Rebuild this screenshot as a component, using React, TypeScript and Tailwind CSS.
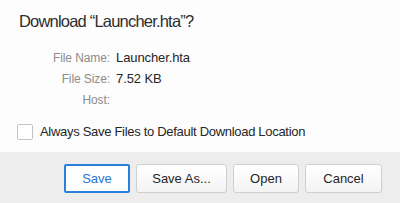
import React from "react";

function Row({ label, value }: { label: string; value?: string }) {
  return (
    <div className="flex h-[21px] items-center">
      <div className="w-[110px] text-right text-[12px] tracking-[-0.1px] text-[#8c8c8c]">{label}</div>
      <div className="pl-[6px] text-[13px] tracking-[-0.1px] text-[#262626]">{value}</div>
    </div>
  );
}

export default function App() {
  const btn =
    "h-[29px] rounded-[3px] border border-[#cfcfcf] bg-gradient-to-b from-white to-[#f4f4f4] text-[13px] text-[#262626]";

  return (
    <div
      className="flex h-[203px] w-[400px] flex-col bg-white"
      style={{ fontFamily: "'Liberation Sans', Arial, sans-serif" }}
    >
      <div className="flex-1 bg-[#fdfdfd]">
        <div className="pl-[19px] pt-[10px] text-[16.5px] leading-[22px] tracking-[-0.8px] text-[#2e2e2e]">
          Download “Launcher.hta”?
        </div>
        <div className="mt-[15px]">
          <Row label="File Name:" value="Launcher.hta" />
          <Row label="File Size:" value="7.52 KB" />
          <Row label="Host:" />
        </div>
        <label className="mt-[12px] flex items-center pl-[17px] text-[13px] tracking-[-0.3px] text-[#262626]">
          <span className="h-[16px] w-[16px] rounded-[2px] border border-[#c4c4c4] bg-white" />
          <span className="pl-[7px]">Always Save Files to Default Download Location</span>
        </label>
      </div>
      <div className="flex h-[51px] items-start justify-end gap-[6px] bg-[#ededed] pr-[18px] pt-[12px]">
        <button className="h-[29px] w-[66px] rounded-[2px] border-2 border-[#2a80d8] bg-white text-[13px] text-[#1f74d4]">
          Save
        </button>
        <button className={`${btn} w-[91px]`}>Save As...</button>
        <button className={`${btn} w-[66px]`}>Open</button>
        <button className={`${btn} w-[77px]`}>Cancel</button>
      </div>
    </div>
  );
}
